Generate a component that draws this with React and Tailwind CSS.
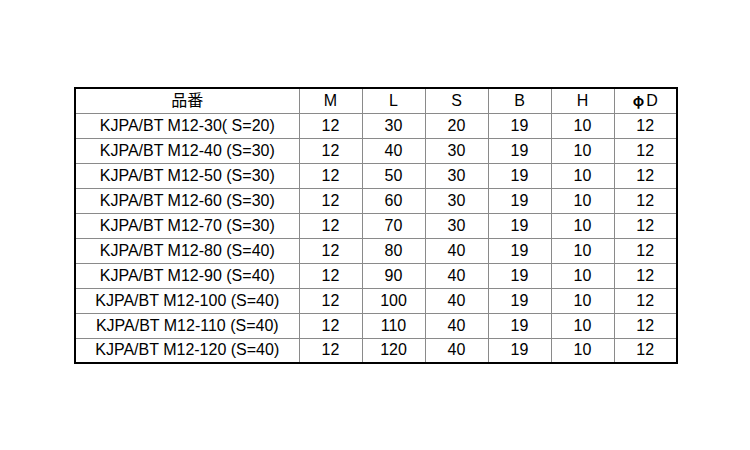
import React from "react";

const rows = [
  ["KJPA/BT M12-30( S=20)", "12", "30", "20", "19", "10", "12"],
  ["KJPA/BT M12-40 (S=30)", "12", "40", "30", "19", "10", "12"],
  ["KJPA/BT M12-50 (S=30)", "12", "50", "30", "19", "10", "12"],
  ["KJPA/BT M12-60 (S=30)", "12", "60", "30", "19", "10", "12"],
  ["KJPA/BT M12-70 (S=30)", "12", "70", "30", "19", "10", "12"],
  ["KJPA/BT M12-80 (S=40)", "12", "80", "40", "19", "10", "12"],
  ["KJPA/BT M12-90 (S=40)", "12", "90", "40", "19", "10", "12"],
  ["KJPA/BT M12-100 (S=40)", "12", "100", "40", "19", "10", "12"],
  ["KJPA/BT M12-110 (S=40)", "12", "110", "40", "19", "10", "12"],
  ["KJPA/BT M12-120 (S=40)", "12", "120", "40", "19", "10", "12"],
];

const headers = ["品番", "M", "L", "S", "B", "H"];

export default function App() {
  return (
    <div className="w-[750px] h-[450px] bg-white pl-[74px] pt-[87px] font-['Liberation_Sans','Noto_Sans_CJK_JP',sans-serif] text-black">
      <table className="border-collapse border-2 border-black text-[16px] leading-none">
        <thead>
          <tr className="h-[25px]">
            {headers.map((h, i) => (
              <th
                key={i}
                className={`border border-[#8a8a8a] font-normal text-center p-0 ${i === 0 ? "w-[224px]" : "w-[63px]"}`}
              >
                {h}
              </th>
            ))}
            <th className="border border-[#8a8a8a] font-normal text-center p-0 w-[63px]">
              <span className="font-['Noto_Sans_CJK_JP',sans-serif] font-bold text-[14px]">φ</span>
              <span className="ml-[2px]">D</span>
            </th>
          </tr>
        </thead>
        <tbody>
          {rows.map((r, ri) => (
            <tr key={ri} className="h-[25px]">
              {r.map((c, ci) => (
                <td key={ci} className="border border-[#8a8a8a] text-center p-0">
                  {c}
                </td>
              ))}
            </tr>
          ))}
        </tbody>
      </table>
    </div>
  );
}
